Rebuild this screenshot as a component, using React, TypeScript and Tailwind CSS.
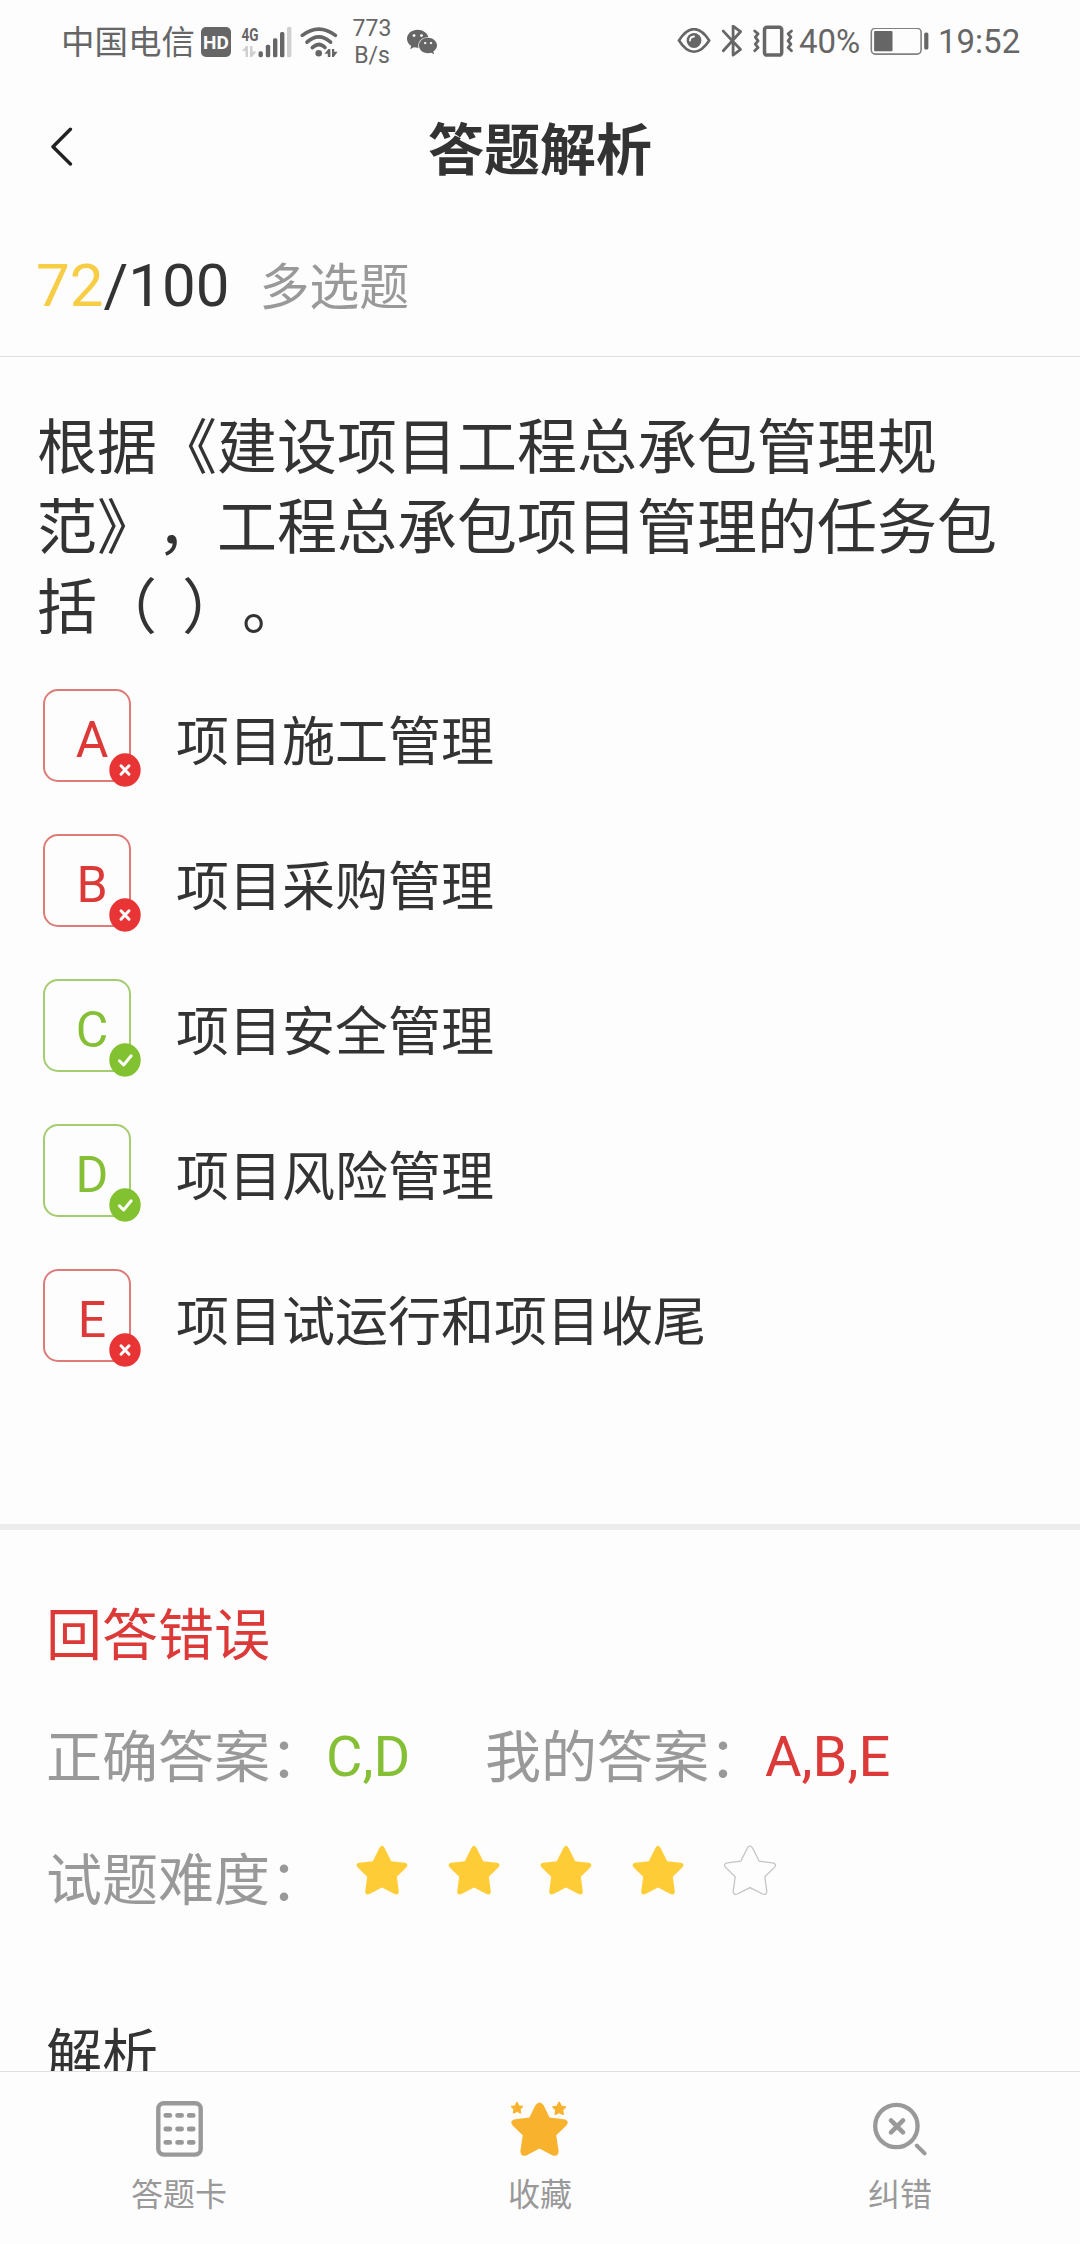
import { FaWeixin } from "react-icons/fa";

type Option = {
  key: string;
  text: string;
  correct: boolean;
};

const options: Option[] = [
  { key: "A", text: "项目施工管理", correct: false },
  { key: "B", text: "项目采购管理", correct: false },
  { key: "C", text: "项目安全管理", correct: true },
  { key: "D", text: "项目风险管理", correct: true },
  { key: "E", text: "项目试运行和项目收尾", correct: false },
];

const difficulty = 4;

const starPath =
  "M22.3 3.2Q25 -1.6 27.7 3.2L34.2 16.2L47.6 17.8Q52.4 18.8 49.2 22.6L39.8 31.8L41.8 46.2Q41.6 50.6 37.6 49L25 42.6L12.4 49Q8.4 50.6 8.2 46.2L10.2 31.8L0.8 22.6Q-2.4 18.8 2.4 17.8L15.8 16.2Z";

function StatusBar() {
  return (
    <div className="flex h-[84px] shrink-0 items-center pl-[61px] pr-[59px] text-[33px] leading-none text-[#666]">
      <span className="w-[138px] whitespace-nowrap pt-[2px] text-[33.5px] leading-[50px]">中国电信</span>
      <span className="ml-[2px] flex h-[30px] w-[30px] items-center justify-center rounded-[5px] bg-[#666] text-[19px] font-bold text-white">
        HD
      </span>
      <svg className="ml-[10px] h-[33px] w-[51px]" viewBox="241 24 51 33">
        <text x="241.5" y="39" fontSize="18" fontWeight="700" fill="#666" textLength="17" lengthAdjust="spacingAndGlyphs">4G</text>
        <g fill="#d0d0d0">
          <path d="M242 49L246 44H248V55H245.5V49ZM250 44H252.5V49.5H256.5L252 55H250Z" />
          <rect x="287" y="24.7" width="4.4" height="30.6" rx="1.6" />
        </g>
        <g fill="#666">
          <rect x="258.5" y="49.3" width="4.4" height="6" rx="1.8" />
          <rect x="265.8" y="42.7" width="4.4" height="12.6" rx="1.6" />
          <rect x="273" y="36.3" width="4.4" height="19" rx="1.6" />
          <rect x="280" y="30" width="4.4" height="25.3" rx="1.6" />
        </g>
      </svg>
      <svg className="ml-[8px] h-[32px] w-[38px]" viewBox="300 24 38 32">
        <g fill="none" stroke="#666" strokeWidth="3.6" strokeLinecap="round">
          <path d="M302.3 33.4Q318.8 20.8 335.4 33.4" />
          <path d="M307 40.2Q318.8 29.6 330.6 40.2" />
          <path d="M312.3 45.6Q318.8 39.4 325 45.6" />
        </g>
        <circle cx="318.7" cy="51.3" r="3.3" fill="#666" />
        <path fill="#666" d="M324.5 51.8L328.4 47H330.4V55H327.8V51.8ZM332 47H334.2V49.8H337.6L333.8 55H332Z" />
      </svg>
      <span className="ml-[12px] flex w-[44px] flex-col items-center text-[23px] leading-[27px]">
        <span>773</span>
        <span>B/s</span>
      </span>
      <FaWeixin className="ml-[12px] h-[28px] w-[32px]" />

      <svg className="ml-auto h-[28px] w-[34px]" viewBox="676.5 27.5 34 28">
        <path d="M678.5 40Q685.5 28.6 693.5 28.6Q701.5 28.6 708.7 40Q701.5 51.2 693.5 51.2Q685.5 51.2 678.5 40Z" fill="none" stroke="#666" strokeWidth="2.6" />
        <circle cx="693.5" cy="40" r="7.4" fill="#666" />
        <path d="M689.5 40Q689.7 36.2 693.5 36" fill="none" stroke="#fff" strokeWidth="1.8" strokeLinecap="round" />
      </svg>
      <svg className="ml-[10px] h-[34px] w-[22px]" viewBox="720.5 24.5 22 34">
        <path d="M722.8 30.6L740 49L732.6 54.6V25.6L740 31.2L722.8 50.2" fill="none" stroke="#666" strokeWidth="2.8" strokeLinecap="round" strokeLinejoin="round" />
      </svg>
      <svg className="ml-[9px] h-[34px] w-[42px]" viewBox="751.5 24 42 34">
        <rect x="764" y="26.3" width="17.2" height="27.8" rx="2.4" fill="none" stroke="#666" strokeWidth="3.5" />
        <g fill="none" stroke="#666" strokeWidth="2.8" strokeLinecap="round" strokeLinejoin="round">
          <path d="M754.2 30L757.6 32.8L754.8 36.2L757.6 39.8L754.8 43.2L757.6 46.6L754.2 49.8" />
          <path d="M791 30L787.6 32.8L790.4 36.2L787.6 39.8L790.4 43.2L787.6 46.6L791 49.8" />
        </g>
      </svg>
      <span className="-mt-[2px] ml-[5px] w-[62px] whitespace-nowrap">40%</span>
      <svg className="ml-[9px] h-[29px] w-[59px]" viewBox="869.5 27.5 59 29">
        <rect x="870.8" y="27.8" width="49.8" height="25.8" rx="4" fill="none" stroke="#808080" strokeWidth="1.6" />
        <rect x="873.6" y="30.4" width="18.4" height="20.4" rx="1" fill="#666" />
        <rect x="923.7" y="32" width="4.2" height="17" rx="1.6" fill="#666" />
      </svg>
      <span className="-mt-[2px] ml-[9px] w-[83px] whitespace-nowrap">19:52</span>
    </div>
  );
}

function OptionRow({ option }: { option: Option }) {
  const tone = option.correct
    ? "border-[#a3cd70] text-[#85bf35]"
    : "border-[#dd7b79] text-[#dc3a38]";
  return (
    <li className="flex h-[145px] items-center pl-[43px]">
      <div className={`relative flex h-[93px] w-[88px] items-center justify-center rounded-[15px] border-2 pl-[10px] pt-[9px] text-[50px] leading-none ${tone}`}>
        {option.key}
        <svg className="absolute -bottom-[7px] -right-[12px] h-[34px] w-[32px]" viewBox="0 0 32 34" preserveAspectRatio="none">
          <ellipse cx="16" cy="17" rx="15.7" ry="16.7" fill={option.correct ? "#82c12f" : "#e83434"} />
          <path
            d={option.correct ? "M10.4 17.8L14.6 22L22.2 12.8" : "M12 12.8L20 21.2M20 12.8L12 21.2"}
            fill="none"
            stroke="#fff"
            strokeWidth="3"
            strokeLinecap="round"
            strokeLinejoin="round"
          />
        </svg>
      </div>
      <span className="ml-[45px] pt-[15px] text-[53px] leading-none text-[#333]">{option.text}</span>
    </li>
  );
}

function Label({ text }: { text: string }) {
  return (
    <span className="pt-[4px] text-[#999]">
      {text}
      <span>：</span>
    </span>
  );
}

function Star({ filled }: { filled: boolean }) {
  return (
    <svg className="h-[52px] w-[52px]" viewBox="-1 -1 52 52">
      <path d={starPath} fill={filled ? "#fecc36" : "none"} stroke={filled ? "none" : "#c4c4c4"} strokeWidth="1.3" />
    </svg>
  );
}

function TabBar() {
  return (
    <nav className="grid h-[173px] shrink-0 grid-cols-3 border-t border-[#e0e0e0] text-[32px] leading-none text-[#999]">
      <div className="flex flex-col items-center pt-[27px]">
        <svg className="h-[60px] w-[60px]" viewBox="0 0 60 60">
          <rect x="8.3" y="4.2" width="42.4" height="51.4" rx="5.5" fill="none" stroke="#999" strokeWidth="4.4" />
          <path
            d="M15.8 16.4H19.8M27.6 16.4H31.6M39.2 16.4H43.2M15.8 30H19.8M27.6 30H31.6M39.2 30H43.2M15.8 43.4H19.8M27.6 43.4H31.6M39.2 43.4H43.2"
            stroke="#999"
            strokeWidth="4.8"
            strokeLinecap="round"
          />
        </svg>
        <span className="mr-[2px] mt-[20px]">答题卡</span>
      </div>
      <div className="flex flex-col items-center pt-[27px]">
        <svg className="h-[60px] w-[60px]" viewBox="0 0 60 60" fill="#f8b22d">
          <path d="M25.4 6.2Q29.5 0.6 33.6 6.2L39.6 18.4L53.8 20.2Q60 21.6 56.4 26.4L46.2 36.2L48.6 51.8Q48.6 58.2 42.6 56.4L29.5 49.6L16.4 56.4Q10.4 58.2 10.4 51.8L12.8 36.2L2.6 26.4Q-1 21.6 5.2 20.2L19.4 18.4Z" />
          <svg x="0.8" y="2.2" width="12.4" height="12.8" viewBox="0 0 50 50"><path d={starPath} /></svg>
          <svg x="42" y="2.2" width="14.4" height="14" viewBox="0 0 50 50"><path d={starPath} /></svg>
        </svg>
        <span className="mt-[20px]">收藏</span>
      </div>
      <div className="flex flex-col items-center pt-[27px]">
        <svg className="h-[60px] w-[60px]" viewBox="0 0 60 60" fill="none" stroke="#999" strokeLinecap="round">
          <circle cx="26.4" cy="27" r="21.2" strokeWidth="4.3" />
          <path d="M21 21.4L33 33.4M33 21.4L21 33.4" strokeWidth="4.6" />
          <path d="M46.8 46.6L54.6 54.4" strokeWidth="4" />
        </svg>
        <span className="mt-[20px]">纠错</span>
      </div>
    </nav>
  );
}

export default function App() {
  return (
    <div className="flex h-[2244px] w-[1080px] flex-col overflow-hidden bg-[#fdfdfd] font-[Roboto,'Noto_Sans_CJK_SC',sans-serif] text-[#333] [text-spacing-trim:space-all]">
      <StatusBar />

      <header className="grid h-[126px] shrink-0 grid-cols-3 items-center">
        <svg className="ml-[50px] h-[40px] w-[24px]" viewBox="50 126 24 40">
          <path d="M70.4 128.2L53 145.7L70.4 163" fill="none" stroke="#222" strokeWidth="3.4" strokeLinecap="round" strokeLinejoin="round" />
        </svg>
        <h1 className="pt-[7px] text-center text-[56px] font-bold leading-none">答题解析</h1>
      </header>

      <div className="flex h-[147px] shrink-0 items-center border-b border-[#e0e0e0] pl-[36px] pt-[6px] leading-none">
        <span className="text-[60px]">
          <span className="text-[#f7cd46]">72</span>/100
        </span>
        <span className="ml-[30px] pt-[4px] text-[50px] text-[#999]">多选题</span>
      </div>

      <main className="min-h-0 flex-1 overflow-hidden">
        <p className="mt-[52px] pl-[37px] pr-[35px] text-[60px] leading-[80px] [word-spacing:10px]">
          根据《建设项目工程总承包管理规范》，工程总承包项目管理的任务包括（ ）。
        </p>
        <ul className="mt-[14px]">
          {options.map((o) => <OptionRow key={o.key} option={o} />)}
        </ul>

        <div className="mt-[136px] h-[6px] bg-[#ececec]" />

        <section className="pl-[46px] pt-[43px] text-[56px] leading-none">
          <div className="flex h-[122px] items-center pt-[3px] text-[#dc3a38]">回答错误</div>
          <div className="flex h-[122px] items-center">
            <Label text="正确答案" />
            <span className="w-[159px] pt-[2px] text-[#85bf35]">C,D</span>
            <Label text="我的答案" />
            <span className="pt-[2px] text-[#dc3a38]">A,B,E</span>
          </div>
          <div className="flex h-[122px] items-center pt-[2px]">
            <Label text="试题难度" />
            <span className="-mt-[18px] ml-[30px] flex gap-[40px]">
              {[1, 2, 3, 4, 5].map((n) => <Star key={n} filled={n <= difficulty} />)}
            </span>
          </div>
          <div className="mt-[56px] flex h-[122px] items-center">解析</div>
        </section>
      </main>

      <TabBar />
    </div>
  );
}
